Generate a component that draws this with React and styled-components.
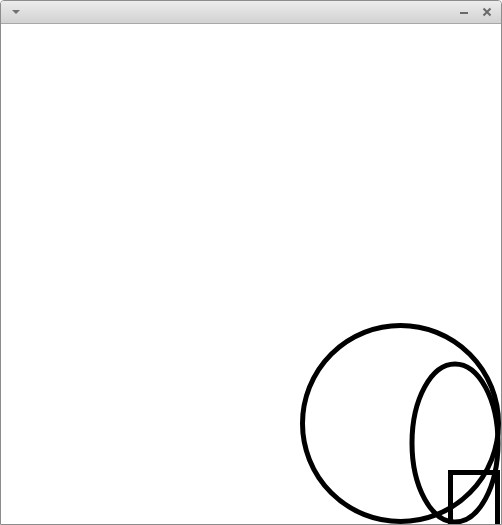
import React from 'react';
import styled, { createGlobalStyle } from 'styled-components';

const GlobalStyle = createGlobalStyle`
  html, body {
    margin: 0;
    padding: 0;
    background: #ffffff;
    font-family: "Liberation Sans", Arial, sans-serif;
  }
`;

const Window = styled.div`
  width: 502px;
  height: 525px;
  box-sizing: border-box;
  border: 1px solid #8c8c8c;
  border-radius: 4px 4px 0 0;
  display: flex;
  flex-direction: column;
  overflow: hidden;
  background: #ffffff;
`;

const TitleBar = styled.div`
  height: 22px;
  flex: none;
  display: flex;
  align-items: center;
  justify-content: space-between;
  padding: 0 9px 0 10px;
  background: linear-gradient(#ececec, #d2d2d2);
  border-bottom: 1px solid #a8a8a8;
`;

const Controls = styled.div`
  display: flex;
  align-items: center;
  gap: 13px;
`;

const Canvas = styled.div`
  flex: 1;
  overflow: hidden;
`;

const Drawing = styled.svg`
  display: block;
  width: 500px;
  height: 500px;
`;

export default function App() {
  return (
    <>
      <GlobalStyle />
      <Window>
        <TitleBar>
          <svg width="10" height="8" viewBox="0 0 10 8">
            <path d="M1 2 L9 2 L5 6 Z" fill="#707070" />
          </svg>
          <Controls>
            <svg width="9" height="9" viewBox="0 0 9 9">
              <rect x="0" y="4" width="8" height="2" fill="#6a6a6a" />
            </svg>
            <svg width="10" height="10" viewBox="0 0 10 10">
              <path d="M1.5 1.5 L8.5 8.5 M8.5 1.5 L1.5 8.5" stroke="#6a6a6a" strokeWidth="2" />
            </svg>
          </Controls>
        </TitleBar>
        <Canvas>
          <Drawing viewBox="0 0 500 500">
            <g fill="none" stroke="#000" strokeWidth="5">
              <circle cx="399.5" cy="399.5" r="98" />
              <ellipse cx="454" cy="419" rx="43" ry="79" />
              <rect x="449.5" y="448.5" width="47" height="60" />
            </g>
          </Drawing>
        </Canvas>
      </Window>
    </>
  );
}
